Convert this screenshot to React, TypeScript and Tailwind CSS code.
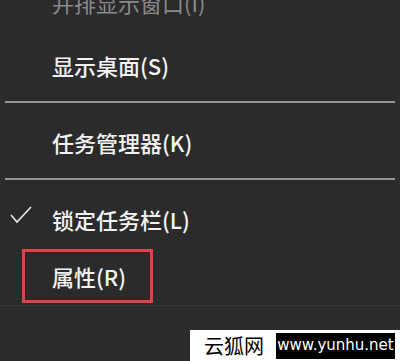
export default function App() {
  const font = { fontFamily: '"Noto Sans CJK SC", "Noto Sans", sans-serif' };

  return (
    <div className="relative w-[400px] h-[361px] overflow-hidden bg-[#2b2b2b]" style={font}>
      <div className="flex flex-col -mt-[27px]">
        {/* 并排显示窗口 (disabled, cut off at the top) */}
        <div className="h-[58px] mb-[5px] flex items-center pl-[52px] text-[22px] text-[#8a8a8a]">
          并排显示窗口(I)
        </div>

        <div className="h-[58px] flex items-center pl-[52px] text-[22px] font-medium text-[#f2f2f2]">
          显示桌面(S)
        </div>

        <div className="pt-[7px] pb-[10px] px-[5px]">
          <div className="h-[2px] bg-[#959595]" />
        </div>

        <div className="h-[58px] flex items-center pl-[52px] text-[22px] font-medium text-[#f2f2f2]">
          任务管理器(K)
        </div>

        <div className="pt-[7px] pb-[10px] px-[5px]">
          <div className="h-[2px] bg-[#959595]" />
        </div>

        <div className="relative h-[58px] flex items-center pl-[52px] text-[22px] font-medium text-[#f2f2f2]">
          <svg
            className="absolute left-[9px] top-[16px]"
            width="24"
            height="18"
            viewBox="0 0 24 18"
            fill="none"
            stroke="#e8e8e8"
            strokeWidth="1.6"
          >
            <polyline points="2,9 8,16 22,1" />
          </svg>
          锁定任务栏(L)
        </div>

        <div className="relative h-[58px] flex items-center pl-[52px] text-[22px] font-medium text-[#f2f2f2] border-b border-[#363636]">
          <div className="absolute left-[22px] top-[1px] w-[131px] h-[54px] border-[3px] border-[#d9464e] shadow-[inset_0_0_0_1px_#4a1518]" />
          属性(R)
        </div>
      </div>

      {/* watermark */}
      <div className="absolute left-[190px] top-[330px] w-[210px] h-[31px] bg-white flex items-center pl-[14px] pr-[5px]">
        <span className="text-[20px] leading-none text-black w-[72px]">云狐网</span>
        <div
          className="flex-1 h-[26px] bg-black flex items-center justify-center text-white text-[15px]"
          style={{ fontFamily: '"DejaVu Sans", sans-serif' }}
        >
          www.yunhu.net
        </div>
      </div>
    </div>
  );
}
